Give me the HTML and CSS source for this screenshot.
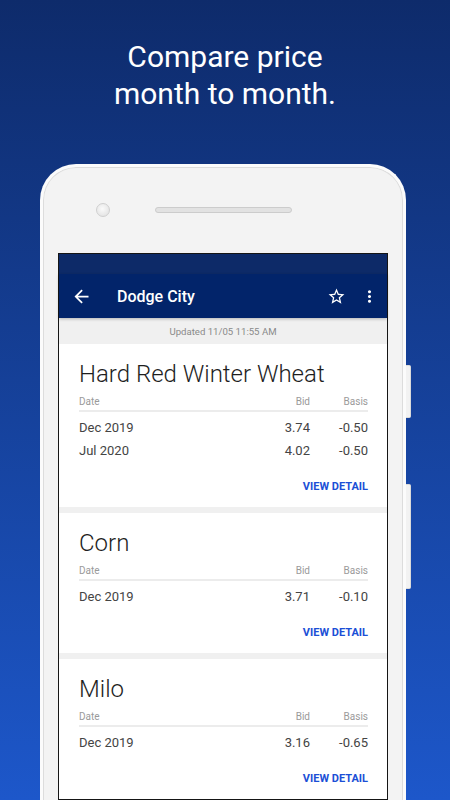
FILE: index.html
```html
<!DOCTYPE html>
<html>
  <head>
    <title>Dodge City prices</title>
    <link rel="stylesheet" href="styles.css">
  </head>
  <body>
    <div class="seite">
      <h1 class="headline">Compare price<br>month to month.</h1>

      <div class="device-row">
        <div class="phone">
          <div class="phone-top">
            <div class="camera"></div>
            <div class="speaker"></div>
          </div>

          <div class="screen">
            <div class="status-bar"></div>
            <div class="app-bar">
              <svg class="icon-back" viewBox="0 0 24 24"><path d="M20 11H7.83l5.59-5.59L12 4l-8 8 8 8 1.41-1.41L7.83 13H20v-2z"/></svg>
              <span class="app-title">Dodge City</span>
              <svg class="icon-star" viewBox="0 0 24 24"><path d="M22 9.24l-7.19-.62L12 2 9.19 8.63 2 9.24l5.46 4.730L5.82 21 12 17.27 18.18 21l-1.63-7.03L22 9.24zM12 15.4l-3.76 2.27 1-4.28-3.32-2.88 4.38-.38L12 6.1l1.71 4.04 4.38.38-3.32 2.88 1 4.28L12 15.4z"/></svg>
              <svg class="icon-more" viewBox="0 0 24 24"><path d="M12 8c1.1 0 2-.9 2-2s-.9-2-2-2-2 .9-2 2 .9 2 2 2zm0 2c-1.1 0-2 .9-2 2s.9 2 2 2 2-.9 2-2-.9-2-2-2zm0 6c-1.1 0-2 .9-2 2s.9 2 2 2 2-.9 2-2-.9-2-2-2z"/></svg>
            </div>
            <div class="updated">Updated 11/05 11:55 AM</div>

            <div class="card">
              <div class="card-title">Hard Red Winter Wheat</div>
              <div class="price-head">
                <span>Date</span><span>Bid</span><span>Basis</span>
              </div>
              <div class="price-row">
                <span>Dec 2019</span><span>3.74</span><span>-0.50</span>
              </div>
              <div class="price-row">
                <span>Jul 2020</span><span>4.02</span><span>-0.50</span>
              </div>
              <div class="view-detail">VIEW DETAIL</div>
            </div>

            <div class="card">
              <div class="card-title">Corn</div>
              <div class="price-head">
                <span>Date</span><span>Bid</span><span>Basis</span>
              </div>
              <div class="price-row">
                <span>Dec 2019</span><span>3.71</span><span>-0.10</span>
              </div>
              <div class="view-detail">VIEW DETAIL</div>
            </div>

            <div class="card">
              <div class="card-title">Milo</div>
              <div class="price-head">
                <span>Date</span><span>Bid</span><span>Basis</span>
              </div>
              <div class="price-row">
                <span>Dec 2019</span><span>3.16</span><span>-0.65</span>
              </div>
              <div class="view-detail">VIEW DETAIL</div>
            </div>
          </div>
        </div>

        <!-- volume / power keys -->
        <div class="side-keys">
          <div class="key key-short"></div>
          <div class="key key-long"></div>
        </div>
      </div>
    </div>
  </body>
</html>
```

FILE: styles.css
```css
  body {
    margin: 0;
    font-family: Roboto, "Liberation Sans", sans-serif;
  }

  .seite {
    width: 450px;
    height: 800px;
    overflow: hidden;
    background: linear-gradient(to bottom, #0e2b6b, #1d57ca);
  }

  .headline {
    margin: 0;
    padding-top: 38px;
    color: white;
    font-size: 30px;
    font-weight: 400;
    line-height: 37px;
    text-align: center;
  }

  .device-row {
    display: flex;
    margin-top: 52px;
    margin-left: 40px;
  }

  .phone {
    box-sizing: border-box;
    width: 366px;
    height: 700px;
    padding: 0 15px;
    background-color: #f3f3f3;
    border: 3px solid #fbfbfb;
    border-bottom: none;
    border-radius: 36px 36px 0 0;
    box-shadow: inset 0 0 0 1px #dcdcdc;
  }

  .phone-top {
    display: flex;
    align-items: center;
    height: 86px;
  }

  .camera {
    box-sizing: border-box;
    width: 14px;
    height: 14px;
    margin-left: 38px;
    border-radius: 50%;
    border: 1px solid #cfcfcf;
    background: radial-gradient(circle at 45% 40%, #fafafa, #dedede);
  }

  .speaker {
    box-sizing: border-box;
    width: 137px;
    height: 6px;
    margin-left: 45px;
    border-radius: 3px;
    border: 1px solid #cccccc;
    background-color: #e2e2e2;
  }

  .screen {
    border: 1px solid #151515;
    border-bottom-width: 2px;
    background-color: #f0f0f0;
  }

  .status-bar {
    height: 20px;
    background-color: #0d2a68;
  }

  .app-bar {
    display: flex;
    align-items: center;
    height: 44px;
    padding: 0 8px 0 12px;
    background-color: #02246a;
    position: relative;
    box-shadow: 0 1px 3px rgba(0, 0, 0, 0.25);
  }

  .app-bar svg {
    fill: white;
  }

  .icon-back {
    width: 21px;
    height: 21px;
  }

  .app-title {
    flex: 1;
    margin-left: 25px;
    color: white;
    font-size: 16px;
    font-weight: 500;
  }

  .icon-star {
    width: 19px;
    height: 19px;
  }

  .icon-more {
    width: 19px;
    height: 19px;
    margin-left: 14px;
  }

  .updated {
    height: 26px;
    line-height: 27px;
    text-align: center;
    font-size: 9.6px;
    color: #8a8a8a;
  }

  .card {
    padding: 15px 19px 13px 20px;
    background-color: white;
    margin-bottom: 6px;
  }

  .card:last-child {
    margin-bottom: 0;
  }

  .card-title {
    font-size: 24px;
    font-weight: 300;
    line-height: 30px;
    color: #1e1e1e;
  }

  .price-head,
  .price-row {
    display: grid;
    grid-template-columns: 1fr 60px 58px;
  }

  .price-head span + span,
  .price-row span + span {
    text-align: right;
  }

  .price-head {
    margin-top: 6px;
    padding-bottom: 1px;
    line-height: 14px;
    font-size: 10px;
    color: #9a9a9a;
    border-bottom: 2px solid #ececec;
    margin-bottom: 4px;
  }

  .price-row {
    line-height: 23px;
    font-size: 13px;
    color: #444444;
  }

  .view-detail {
    margin-top: 18px;
    line-height: 14px;
    text-align: right;
    font-size: 11px;
    font-weight: 700;
    color: #1b4fd6;
  }

  .side-keys {
    display: flex;
    flex-direction: column;
    gap: 66px;
    padding-top: 201px;
  }

  .key {
    width: 4px;
    background-color: #f2f2f2;
    border-radius: 0 2px 2px 0;
    border: 1px solid #dadada;
    border-left: none;
  }

  .key-short {
    height: 51px;
  }

  .key-long {
    height: 103px;
  }
```
